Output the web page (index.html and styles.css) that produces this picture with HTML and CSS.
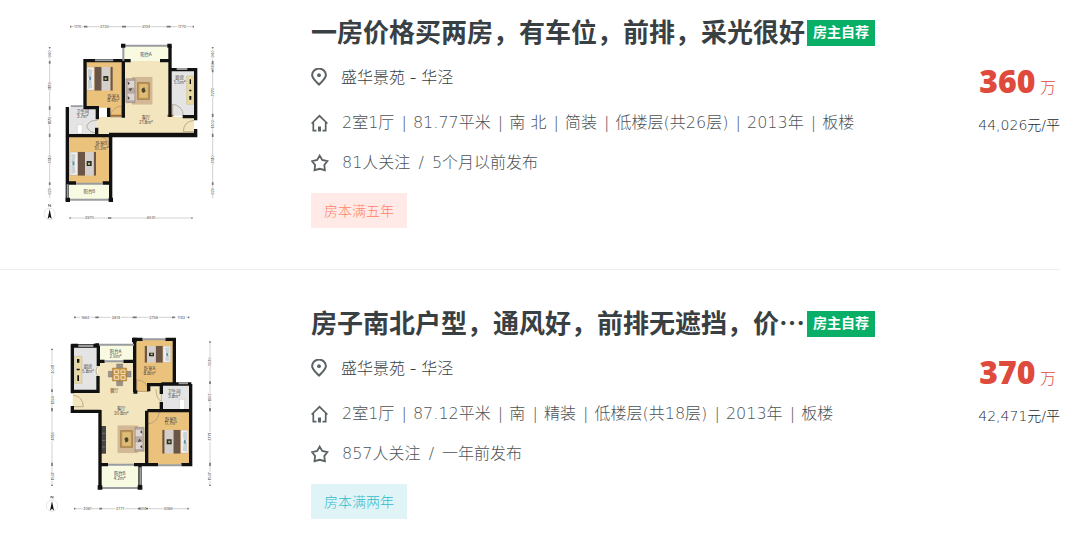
FILE: index.html
```
<!DOCTYPE html>
<html lang="zh-CN">
<head>
  <meta charset="UTF-8">
  <title>盛华景苑 - 二手房</title>
  <meta name="viewport" content="width=device-width, initial-scale=1.0">
  <link rel="stylesheet" href="styles.css">
</head>
<body>

<!-- shared icons and furniture -->
<svg class="sprite" aria-hidden="true">
  <symbol id="icon-pin" viewBox="0 0 18 18">
    <path d="M8 16.500C5.200 13.700 1.100 10.600 1.100 7.100a6.900 6.500 0 0 1 13.800 0C14.900 10.600 10.800 13.700 8 16.500Z"/>
    <circle class="dot" cx="8" cy="7.200" r="1.900"/>
  </symbol>
  <symbol id="icon-home" viewBox="0 0 18 18">
    <path stroke-width="1.700" d="M.6 9.500 8.500 1.800 16.400 9.500M2.300 8V16.700H5.500M14.700 8V16.700H11.500"/>
    <path class="dot" d="M7 12.500H10V17.500H7Z"/>
  </symbol>
  <symbol id="icon-star" viewBox="0 0 18 18">
    <path stroke-width="1.800" d="M8.700 1.600 11.200 6 16.400 7.100 13.300 11 13.900 16.200 8.700 14.800 3.500 16.200 4.100 11 1 7.100 6.200 6Z"/>
  </symbol>
  <symbol id="bed" viewBox="0 0 80 72">
    <path fill="#f3f0ec" stroke="#8a7a6a" d="M1 1H24V71H1Z"/>
    <path fill="#c9d3d8" d="M5 6 18 9 15 31 5 34ZM5 39 15 42 18 63 5 67Z"/>
    <path fill="#5d93ad" d="M9 28 15 32 14 42 8 39Z"/>
    <path fill="#6b5547" d="M25 0H46V72H25ZM72 0H79V72H72Z"/>
    <path fill="#d5cfcb" d="M46 0H72V72H46Z"/>
    <path fill="#2b2b28" d="M51 28H66V43H51Z"/>
    <path fill="#b9c86c" d="M55 33H61V39H55Z"/>
  </symbol>
  <symbol id="sofa" viewBox="0 0 82 84">
    <path fill="#d3b896" d="M20 0H82V84H20Z"/>
    <path fill="#c49a58" stroke="#8d6b35" stroke-width="2" d="M37 18H72V68H37Z"/>
    <path fill="#e0bd76" d="M42 23H67V63H42Z"/>
    <path fill="#4b4431" d="M49 36 57 32 61 44 55 49 49 45Z"/>
    <path fill="#b7aaa4" stroke="#6f615c" d="M1 6H29V78H1Z"/>
    <path fill="#ddd5d0" d="M7 13H27V33H7ZM7 51H27V71H7Z"/>
    <path fill="#584c4a" d="M7 14 14 20 8 26ZM9 37 21 33 16 44ZM7 58 14 64 8 70Z"/>
  </symbol>
  <symbol id="north" viewBox="0 0 36 50">
    <path fill="none" stroke="#444" stroke-width="2" d="M15 9V2L21 9V2"/>
    <circle cx="18" cy="31" r="17" fill="#fff" stroke="#cfcfcf" stroke-width="1.500"/>
    <path fill="#111" d="M18 17 24 46 18 40 12 46Z"/>
  </symbol>
</svg>

<ul class="house-list">
  <li class="house">
    <a class="plan" href="#" aria-label="户型图">
      <svg viewBox="0 0 600 630">
        <!-- floors -->
        <path class="tile" d="M284 150H418V318H492V372H200V318H284Z"/>
        <path class="wood" d="M166 150H278V318H238V290H166ZM116 372H242V520H116Z"/>
        <path class="balcony" d="M280 104H418V150H280ZM114 520H243V566H114Z"/>
        <path class="stone" d="M420 176H494V314H420ZM116 290H200V370H116Z"/>
        <!-- furniture -->
        <use href="#bed" x="169" y="167" width="80" height="72"/>
        <use href="#bed" x="119" y="422" width="80" height="72"/>
        <use href="#sofa" x="286" y="197" width="82" height="84"/>
        <path fill="#e9d9a5" stroke="#b8a56d" d="M470 195H490V280H470Z"/>
        <path class="ink" d="M479 205H483V219H479ZM478 236H484V241H478ZM478 255H484V266H478Z"/>
        <path class="fixture" d="M142 341H157V368H142Z"/>
        <path fill="#a66d38" d="M240 311H282V317H240ZM412 311H430V317H412Z"/>
        <!-- doors -->
        <path class="door" d="M275 318V285A36 36 0 0 0 240 318ZM428 313V280A34 34 0 0 1 460 313M202 328A32 32 0 0 0 170 345Q176 366 202 366M202 374Q236 376 236 410V374M492 328Q460 332 460 362H492"/>
        <!-- walls -->
        <path class="wall" d="M165 292V149H280V320M160 290H202V325M112 288V570M200 350V374H112M242 372V570M236 318V290M280 149H302M390 149H419M420 104V318M418 176H497V328M458 317H497M497 354V374H202V372M242 374V370H497M110 516H138M218 516H242"/>
        <path class="glass" d="M195 148H250M440 174H472M122 286H158M280 104H418M280 104V149M138 518H218M113 520V566H240"/>
        <path class="ink" d="M273 98H286V110H273ZM412 98H425V110H412ZM107 560H120V573H107ZM236 560H249V573H236Z"/>
        <!-- dimensions -->
        <path class="rule" d="M120 47H132M156 47H210M236 47H334M362 47H442M470 47H490M120 621H166M192 621H350M376 621H486M59 108V116M59 142V213M59 239V317M59 342V435M59 458V530M59 552V562M548 108V116M548 142V152M548 180V231M548 258V328M548 352V435M548 458V530M548 552V562"/>
        <path class="ticks" d="M120 47H124M162 47H172M276 47H288M410 47H422M488 47H492M118 621H122M234 621H244M484 621H488M59 108V112M59 150V158M59 286V296M59 368V378M59 514V522M548 108V112M548 150V158M548 176V184M548 308V318M548 368V378M548 514V522"/>
        <g class="dims">
          <text x="143" y="51">1170</text>
          <text x="223" y="51">2730</text>
          <text x="348" y="51">3104</text>
          <text x="456" y="51">1770</text>
          <text x="178" y="625">2870</text>
          <text x="363" y="625">6041</text>
          <text transform="translate(63 129) rotate(-90)">940</text>
          <text transform="translate(63 226) rotate(-90)">3180</text>
          <text transform="translate(63 329) rotate(-90)">1870</text>
          <text transform="translate(63 446) rotate(-90)">3410</text>
          <text transform="translate(63 541) rotate(-90)">920</text>
          <text transform="translate(552 129) rotate(-90)">940</text>
          <text transform="translate(552 166) rotate(-90)">560</text>
          <text transform="translate(552 244) rotate(-90)">3270</text>
          <text transform="translate(552 340) rotate(-90)">1300</text>
          <text transform="translate(552 446) rotate(-90)">3410</text>
          <text transform="translate(552 541) rotate(-90)">920</text>
        </g>
        <g class="rooms">
          <text x="348" y="134">阳台A</text>
          <text x="250" y="260">卧室A</text>
          <text x="250" y="273">8.4m²</text>
          <text x="449" y="204">厨房</text>
          <text x="449" y="218">5.5m²</text>
          <text x="158" y="307">卫生间</text>
          <text x="158" y="321">3.7m²</text>
          <text x="348" y="325">客厅</text>
          <text x="348" y="339">21.8m²</text>
          <text x="214" y="402">卧室B</text>
          <text x="214" y="416">10.2m²</text>
          <text x="178" y="547">阳台B</text>
        </g>
        <use href="#north" x="41" y="578" width="36" height="50"/>
      </svg>
    </a>
    <div class="info">
      <div class="title-row">
        <h2><a href="#">一房价格买两房，有车位，前排，采光很好</a></h2>
        <span class="badge">房主自荐</span>
      </div>
      <p class="place"><svg class="icon"><use href="#icon-pin"/></svg><a href="#">盛华景苑 - 华泾</a></p>
      <p class="detail"><svg class="icon"><use href="#icon-home"/></svg><span>2室1厅 <i>|</i> 81.77平米 <i>|</i> 南 北 <i>|</i> 简装 <i>|</i> 低楼层(共26层) <i>|</i> 2013年 <i>|</i> 板楼</span></p>
      <p class="follow"><svg class="icon"><use href="#icon-star"/></svg><span>81人关注 <i>/</i> 5个月以前发布</span></p>
      <span class="tag tag-five">房本满五年</span>
    </div>
    <div class="price">
      <p class="total"><strong>360</strong> 万</p>
      <p class="unit">44,026元/平</p>
    </div>
  </li>

  <li class="house">
    <a class="plan" href="#" aria-label="户型图">
      <svg viewBox="0 -12 600 630">
        <!-- floors -->
        <path class="tile" d="M204 164H314V236H392V312H350V474H212V312H128V258H204Z"/>
        <path class="wood" d="M316 102H432V232H356V258H316ZM350 314H480V476H350Z"/>
        <path class="balcony" d="M204 116H312V164H204ZM210 476H330V544H210Z"/>
        <path class="stone" d="M130 122H202V256H130ZM394 234H482V312H394Z"/>
        <!-- furniture -->
        <use href="#bed" transform="translate(423 170) rotate(180) scale(1 .7)" width="80" height="72"/>
        <use href="#bed" transform="translate(476 443) rotate(180)" width="80" height="72"/>
        <use href="#sofa" transform="translate(344 442) rotate(180)" width="82" height="84"/>
        <path fill="#e9d9a5" stroke="#aaa080" d="M134 151H156V232H134Z"/>
        <path class="ink" d="M141 159H148V170H141ZM142 208H147V225H142ZM140 188H149V193H140Z"/>
        <path fill="#9b9288" stroke="#635c55" d="M260 174H278V188H260ZM260 224H278V239H260ZM235 196H250V213H235ZM288 196H303V213H288Z"/>
        <path fill="#cb9547" stroke="#8a602a" d="M247 186H290V225H247Z"/>
        <path stroke="#f5e4bd" stroke-width="3" fill="none" d="M253 192H266V203H253ZM273 192H285V203H273ZM253 209H266V220H253ZM273 209H285V220H273Z"/>
        <path fill="#474747" d="M213 360H228V443H213Z"/>
        <path stroke="#888" stroke-width="2" d="M216 382H226M216 403H226M216 423H226"/>
        <path class="fixture" d="M448 280H464V311H448Z"/>
        <!-- doors -->
        <path class="door" d="M320 256V222Q350 222 356 256ZM130 268Q158 270 160 302H130M354 314H388Q386 350 354 354M394 264V286Q378 278 378 250M204 181Q192 195 204 210"/>
        <!-- walls -->
        <path class="wall" d="M127 262V120H205V180M124 118H144M190 118H206M204 166H224M280 166H314M314 258V100H338M406 100H433V234M204 210V256H128M127 300V316H212M210 312V546M210 476H234M312 476H384M454 476H482V234M356 256V236H394V264M394 288V314H352M388 314H484M350 314V476M330 476V546M310 258H322M394 234H484"/>
        <path class="glass" d="M145 120H190M206 116H312M338 100H406M224 166H280M446 232H474M384 478H454M234 476H312M214 546H326M331 484V536"/>
        <path class="ink" d="M306 95H320V109H306ZM196 112H207V122H196ZM203 538H217V551H203ZM323 538H337V551H323Z"/>
        <!-- dimensions -->
        <path class="rule" d="M132 34H150M182 34H242M273 34H356M386 34H438M468 34H478M132 608H158M186 608H256M284 608H326M350 608H400M428 608H478M66 128V174M66 206V270M66 296V378M66 406V498M66 524V540M540 106V154M540 182V262M540 288V378M540 408V498M540 524V540"/>
        <path class="ticks" d="M132 34H137M196 34H206M308 34H320M426 34H434M474 34H478M132 608H136M208 608H216M324 608H330M348 608H354M472 608H476M66 128V132M66 250V258M66 306V316M66 470V480M66 536V540M540 106V110M540 226V234M540 306V316M540 470V480M540 536V540"/>
        <g class="dims">
          <text x="166" y="38">1662</text>
          <text x="258" y="38">2814</text>
          <text x="371" y="38">2758</text>
          <text x="454" y="38">1143</text>
          <text x="172" y="612">2081</text>
          <text x="270" y="612">2771</text>
          <text x="338" y="612">804</text>
          <text x="414" y="612">3088</text>
          <text transform="translate(71 190) rotate(-90)">3008</text>
          <text transform="translate(71 283) rotate(-90)">1294</text>
          <text transform="translate(71 392) rotate(-90)">4851</text>
          <text transform="translate(71 511) rotate(-90)">1507</text>
          <text transform="translate(544 168) rotate(-90)">3030</text>
          <text transform="translate(544 275) rotate(-90)">1902</text>
          <text transform="translate(544 393) rotate(-90)">3771</text>
          <text transform="translate(544 511) rotate(-90)">1507</text>
        </g>
        <g class="rooms">
          <text x="257" y="141">阳台A</text>
          <text x="257" y="155">2.6m²</text>
          <text x="174" y="186">厨房</text>
          <text x="174" y="200">5.8m²</text>
          <text x="359" y="193">卧室A</text>
          <text x="359" y="207">8.8m²</text>
          <text x="253" y="257">餐厅</text>
          <text x="432" y="262">卫生间</text>
          <text x="432" y="276">3.8m²</text>
          <text x="274" y="312">客厅</text>
          <text x="274" y="326">20.8m²</text>
          <text x="422" y="344">卧室B</text>
          <text x="422" y="358">11.7m²</text>
          <text x="269" y="507">阳台B</text>
          <text x="269" y="521">4.2m²</text>
        </g>
        <use href="#north" x="48" y="568" width="36" height="50"/>
      </svg>
    </a>
    <div class="info">
      <div class="title-row">
        <h2><a href="#">房子南北户型，通风好，前排无遮挡，价…</a></h2>
        <span class="badge">房主自荐</span>
      </div>
      <p class="place"><svg class="icon"><use href="#icon-pin"/></svg><a href="#">盛华景苑 - 华泾</a></p>
      <p class="detail"><svg class="icon"><use href="#icon-home"/></svg><span>2室1厅 <i>|</i> 87.12平米 <i>|</i> 南 <i>|</i> 精装 <i>|</i> 低楼层(共18层) <i>|</i> 2013年 <i>|</i> 板楼</span></p>
      <p class="follow"><svg class="icon"><use href="#icon-star"/></svg><span>857人关注 <i>/</i> 一年前发布</span></p>
      <span class="tag tag-two">房本满两年</span>
    </div>
    <div class="price">
      <p class="total"><strong>370</strong> 万</p>
      <p class="unit">42,471元/平</p>
    </div>
  </li>
</ul>

</body>
</html>
```
FILE: styles.css
```
* {
  box-sizing: border-box;
}

body {
  margin: 0;
  background: #fff;
  color: #394043;
  font-family: Inter, 'Noto Sans CJK SC', sans-serif;
  font-size: 16px;
  font-weight: 300;
}

a {
  color: inherit;
  text-decoration: none;
}

h2, p {
  margin: 0;
}

.sprite {
  display: none;
}

.house-list {
  list-style: none;
  margin: 0;
  padding: 0 20px 0 0;
}

.house {
  display: grid;
  grid-template-columns: 200px 1fr auto;
  padding: 32px 0 41px;
}

.house:first-child {
  padding-top: 11px;
  border-bottom: 1px solid #eee;
}

/* floor plan */
.plan {
  margin-left: 30px;
  width: 200px;
}

.plan svg {
  display: block;
  width: 100%;
}

.tile { fill: #f3e5bd; }
.wood { fill: #ebc27b; }
.balcony { fill: #f8fae2; }
.stone { fill: #e4e4e5; }
.ink { fill: #111; }
.fixture { fill: #fff; stroke: #aaa; }

.wall {
  fill: none;
  stroke: #111;
  stroke-width: 10;
}

.glass {
  fill: none;
  stroke: #999da0;
  stroke-width: 6;
}

.door {
  fill: none;
  stroke: #a3927a;
  stroke-width: 2;
}

.rule {
  stroke: #bbb;
  stroke-width: 2;
}

.ticks {
  stroke: #777;
  stroke-width: 5;
}

.dims, .rooms {
  font-size: 11px;
  text-anchor: middle;
  fill: #444;
  font-weight: 400;
}

.rooms {
  font-size: 13px;
}

/* listing text */
.info {
  padding: 6px 0 0 111px;
}

.title-row {
  display: flex;
  align-items: center;
  gap: 2px;
  height: 32px;
}

h2 {
  align-self: flex-start;
  font-family: 'Noto Sans CJK SC', sans-serif;
  font-size: 26px;
  font-weight: 700;
  line-height: 28px;
  white-space: nowrap;
}

.badge {
  padding: 0 6px 2px;
  background: #0aaf67;
  color: #fff;
  font-size: 14px;
  font-weight: 700;
  line-height: 24px;
  white-space: nowrap;
}

.place, .detail, .follow {
  display: flex;
  align-items: center;
  gap: 12px;
  line-height: 24px;
  white-space: nowrap;
}

.place {
  margin-top: 16px;
}

.detail, .follow {
  gap: 13px;
  color: #4c5255;
  font-family: 'DejaVu Sans Light', 'DejaVu Sans', 'Noto Sans CJK SC', sans-serif;
  font-weight: 200;
}

.detail {
  margin-top: 22px;
}

.follow {
  margin-top: 16px;
}

.detail i {
  margin: 0 1px 0 2px;
  font-style: normal;
}

.follow i {
  margin: 0 3px;
  font-style: normal;
}

.icon {
  flex: none;
  width: 18px;
  height: 18px;
  fill: none;
  stroke: #5b6265;
  stroke-width: 2;
}

.dot {
  fill: #5b6265;
  stroke: none;
}

.tag {
  display: inline-block;
  margin-top: 18px;
  padding: 0 13px;
  font-size: 14px;
  line-height: 35px;
}

.tag-five {
  background: #ffeae7;
  color: #ff8468;
}

.tag-two {
  background: #e0f4f8;
  color: #33bccb;
}

/* price */
.price {
  padding-top: 48px;
  text-align: right;
  white-space: nowrap;
}

.total {
  padding-right: 4px;
  color: #de4b3c;
  line-height: 44px;
}

.total strong {
  font-family: 'Open Sans', sans-serif;
  font-size: 32px;
  font-weight: 800;
}

.unit {
  margin-top: 4px;
  color: #22282b;
  font-family: 'DejaVu Sans Light', 'DejaVu Sans', 'Noto Sans CJK SC', sans-serif;
  font-size: 14px;
  font-weight: 200;
  line-height: 24px;
}

@media (max-width: 900px) {
  .info {
    padding-left: 40px;
  }

  h2, .detail {
    white-space: normal;
  }

  .title-row {
    height: auto;
  }
}
```
